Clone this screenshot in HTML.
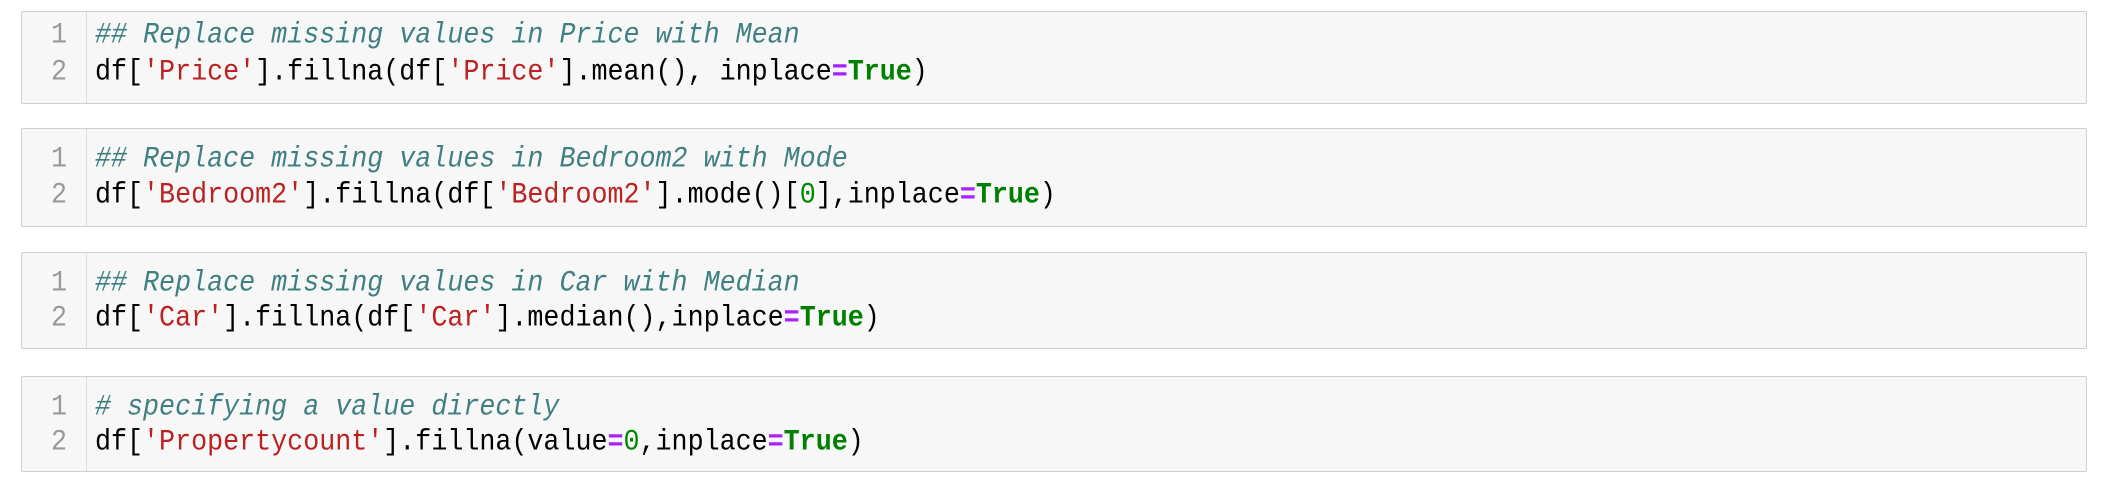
<!DOCTYPE html>
<html><head><style>
html,body{margin:0;padding:0;background:#fff;width:2116px;height:504px;overflow:hidden}
.box{position:absolute;left:21px;width:2066px;background:#f7f7f7;border:1px solid #cfcfcf;border-radius:2px;box-sizing:border-box}
.gut{position:absolute;left:0;top:0;bottom:0;width:64px;border-right:1px solid #ddd}
.ln{position:absolute;left:0;width:45px;text-align:right;color:#999;font:26.7px "Liberation Mono",monospace;line-height:36px;transform:scaleY(1.1)}
.code{position:absolute;left:73px;font:26.7px "Liberation Mono",monospace;line-height:36px;color:#000;white-space:pre;transform:scaleY(1.1);transform-origin:0 50%}
.c{color:#408080;font-style:italic}.s{color:#ba2121}.k{color:#008000;font-weight:bold}.o{color:#aa22ff;font-weight:bold}.n{color:#080}
</style></head><body>
<div class="box" style="top:11px;height:93px"><div class="gut"></div>
<div class="ln" style="top:6px">1</div><div class="ln" style="top:43px">2</div>
<div class="code" style="top:6px"><span class="c">## Replace missing values in Price with Mean</span></div>
<div class="code" style="top:43px">df[<span class="s">'Price'</span>].fillna(df[<span class="s">'Price'</span>].mean(), inplace<span class="o">=</span><span class="k">True</span>)</div></div>

<div class="box" style="top:128px;height:99px"><div class="gut"></div>
<div class="ln" style="top:13px">1</div><div class="ln" style="top:49px">2</div>
<div class="code" style="top:13px"><span class="c">## Replace missing values in Bedroom2 with Mode</span></div>
<div class="code" style="top:49px">df[<span class="s">'Bedroom2'</span>].fillna(df[<span class="s">'Bedroom2'</span>].mode()[<span class="n">0</span>],inplace<span class="o">=</span><span class="k">True</span>)</div></div>

<div class="box" style="top:252px;height:97px"><div class="gut"></div>
<div class="ln" style="top:13px">1</div><div class="ln" style="top:48px">2</div>
<div class="code" style="top:13px"><span class="c">## Replace missing values in Car with Median</span></div>
<div class="code" style="top:48px">df[<span class="s">'Car'</span>].fillna(df[<span class="s">'Car'</span>].median(),inplace<span class="o">=</span><span class="k">True</span>)</div></div>

<div class="box" style="top:376px;height:96px"><div class="gut"></div>
<div class="ln" style="top:13px">1</div><div class="ln" style="top:48px">2</div>
<div class="code" style="top:13px"><span class="c"># specifying a value directly</span></div>
<div class="code" style="top:48px">df[<span class="s">'Propertycount'</span>].fillna(value<span class="o">=</span><span class="n">0</span>,inplace<span class="o">=</span><span class="k">True</span>)</div></div>
</body></html>
